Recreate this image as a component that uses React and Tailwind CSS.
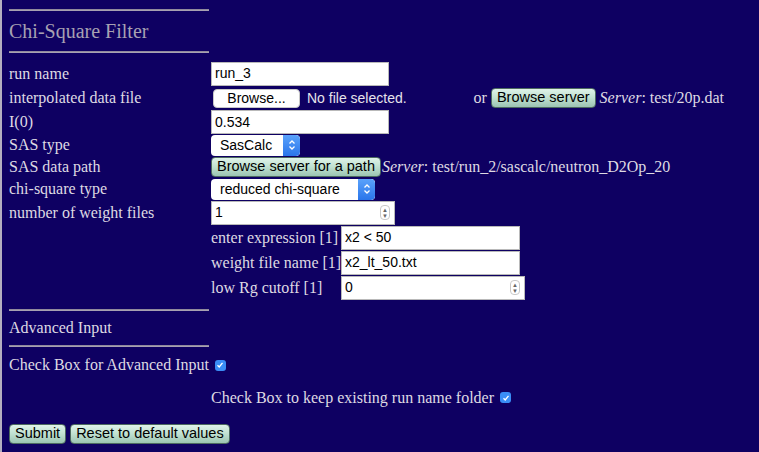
import React from 'react';

const serif = { fontFamily: '"Liberation Serif", "Times New Roman", serif' };
const sans = { fontFamily: '"Liberation Sans", Arial, sans-serif' };

const Hr = () => <div className="w-[200px] h-[2px] bg-[#a7a1b2] border-t border-[#8f899c]" />;

const TextInput = ({ value, w = 'w-[178px]' }) => (
  <div className={`${w} h-[24px] bg-white border border-[#b9b9b9] flex items-center px-[3px] text-[14px] text-black`} style={sans}>
    {value}
  </div>
);

const Spinner = () => (
  <div className="w-[10px] h-[15px] rounded-[4px] border border-[#c9c9c9] flex flex-col items-center justify-center leading-none text-[6px] text-[#666]">
    <span>▲</span>
    <span>▼</span>
  </div>
);

const NumberInput = ({ value, w }) => (
  <div className={`${w} h-[24px] bg-white border border-[#b9b9b9] flex items-center justify-between pl-[3px] pr-[4px] text-[14px] text-black`} style={sans}>
    <span>{value}</span>
    <Spinner />
  </div>
);

const Select = ({ value, w }) => (
  <div className={`${w} h-[21px] bg-white rounded-[4px] flex items-center justify-between text-[14px] text-black overflow-hidden`} style={sans}>
    <span className="pl-[9px]">{value}</span>
    <div className="w-[17px] h-full bg-gradient-to-b from-[#5aa2fb] to-[#2a75ea] rounded-r-[4px] flex items-center justify-center">
      <svg width="8" height="12" viewBox="0 0 8 12" fill="none" stroke="white" strokeWidth="1.3">
        <path d="M1.5 4.5 L4 2 L6.5 4.5" />
        <path d="M1.5 7.5 L4 10 L6.5 7.5" />
      </svg>
    </div>
  </div>
);

const GreenButton = ({ children, className = '' }) => (
  <div className={`h-[20px] px-[5px] rounded-[4px] border border-[#4d6b60] bg-gradient-to-b from-[#dff3e9] via-[#bfe0d0] to-[#9cc4b2] flex items-center whitespace-nowrap text-[14.5px] text-black ${className}`} style={sans}>
    {children}
  </div>
);

const Check = () => (
  <div className="w-[11px] h-[11px] rounded-[3px] bg-[#3a8df6] flex items-center justify-center">
    <svg width="8" height="8" viewBox="0 0 8 8" fill="none" stroke="white" strokeWidth="1.3">
      <path d="M1.5 4.2 L3.2 6 L6.5 1.8" />
    </svg>
  </div>
);

const Row = ({ label, h, children }) => (
  <div className={`flex items-center ${h}`}>
    <div className="w-[202px] shrink-0 whitespace-nowrap">{label}</div>
    <div className="flex items-center whitespace-nowrap">{children}</div>
  </div>
);

const SubRow = ({ label, h, children }) => (
  <div className={`flex items-center ${h}`}>
    <div className="w-[130px] shrink-0 whitespace-nowrap">{label}</div>
    {children}
  </div>
);

export default function App() {
  return (
    <div className="w-[759px] h-[452px] bg-[#0e0062] border-l-2 border-[#b4aec0] text-[#dedae3] text-[16px] overflow-hidden" style={serif}>
      <div className="pl-[7px] pt-[9px]">
        <Hr />
        <div className="h-[40px] flex items-center text-[20px] text-[#a7a1b2]">Chi-Square Filter</div>
        <Hr />

        <div className="mt-[8px]">
          <Row label="run name" h="h-[25px]">
            <TextInput value="run_3" />
          </Row>
          <Row label="interpolated data file" h="h-[24px]">
            <div className="ml-[2px] w-[87px] h-[19px] bg-white rounded-[4px] border border-[#c8c8c8] flex items-center justify-center text-[14px] text-black" style={sans}>
              Browse...
            </div>
            <span className="ml-[7px] text-[14px] text-[#e6e3ea]" style={sans}>No file selected.</span>
            <span className="ml-[67px]">or</span>
            <GreenButton className="ml-[4px]">Browse server</GreenButton>
            <span className="ml-[4px]"><i>Server</i>: test/20p.dat</span>
          </Row>
          <Row label="I(0)" h="h-[24px]">
            <TextInput value="0.534" />
          </Row>
          <Row label="SAS type" h="h-[22px]">
            <Select value="SasCalc" w="w-[89px]" />
          </Row>
          <Row label="SAS data path" h="h-[22px]">
            <GreenButton>Browse server for a path</GreenButton>
            <span className="ml-[1px]"><i>Server</i>: test/run_2/sascalc/neutron_D2Op_20</span>
          </Row>
          <Row label="chi-square type" h="h-[22px]">
            <Select value="reduced chi-square" w="w-[164px]" />
          </Row>
          <Row label="number of weight files" h="h-[25px]">
            <NumberInput value="1" w="w-[184px]" />
          </Row>
          <div className="pl-[202px]">
            <SubRow label="enter expression [1]" h="h-[25px]">
              <TextInput value="x2 < 50" w="w-[179px]" />
            </SubRow>
            <SubRow label="weight file name [1]" h="h-[25px]">
              <TextInput value="x2_lt_50.txt" w="w-[179px]" />
            </SubRow>
            <SubRow label="low Rg cutoff [1]" h="h-[25px]">
              <NumberInput value="0" w="w-[184px]" />
            </SubRow>
          </div>
        </div>

        <div className="mt-[9px]">
          <Hr />
        </div>
        <div className="h-[34px] flex items-center">Advanced Input</div>
        <Hr />
        <div className="h-[36px] flex items-center gap-[6px]">
          <span>Check Box for Advanced Input</span>
          <Check />
        </div>
        <div className="h-[29px] flex items-center gap-[6px] pl-[202px]">
          <span>Check Box to keep existing run name folder</span>
          <Check />
        </div>
        <div className="mt-[12px] flex gap-[4px]">
          <GreenButton>Submit</GreenButton>
          <GreenButton>Reset to default values</GreenButton>
        </div>
      </div>
    </div>
  );
}
